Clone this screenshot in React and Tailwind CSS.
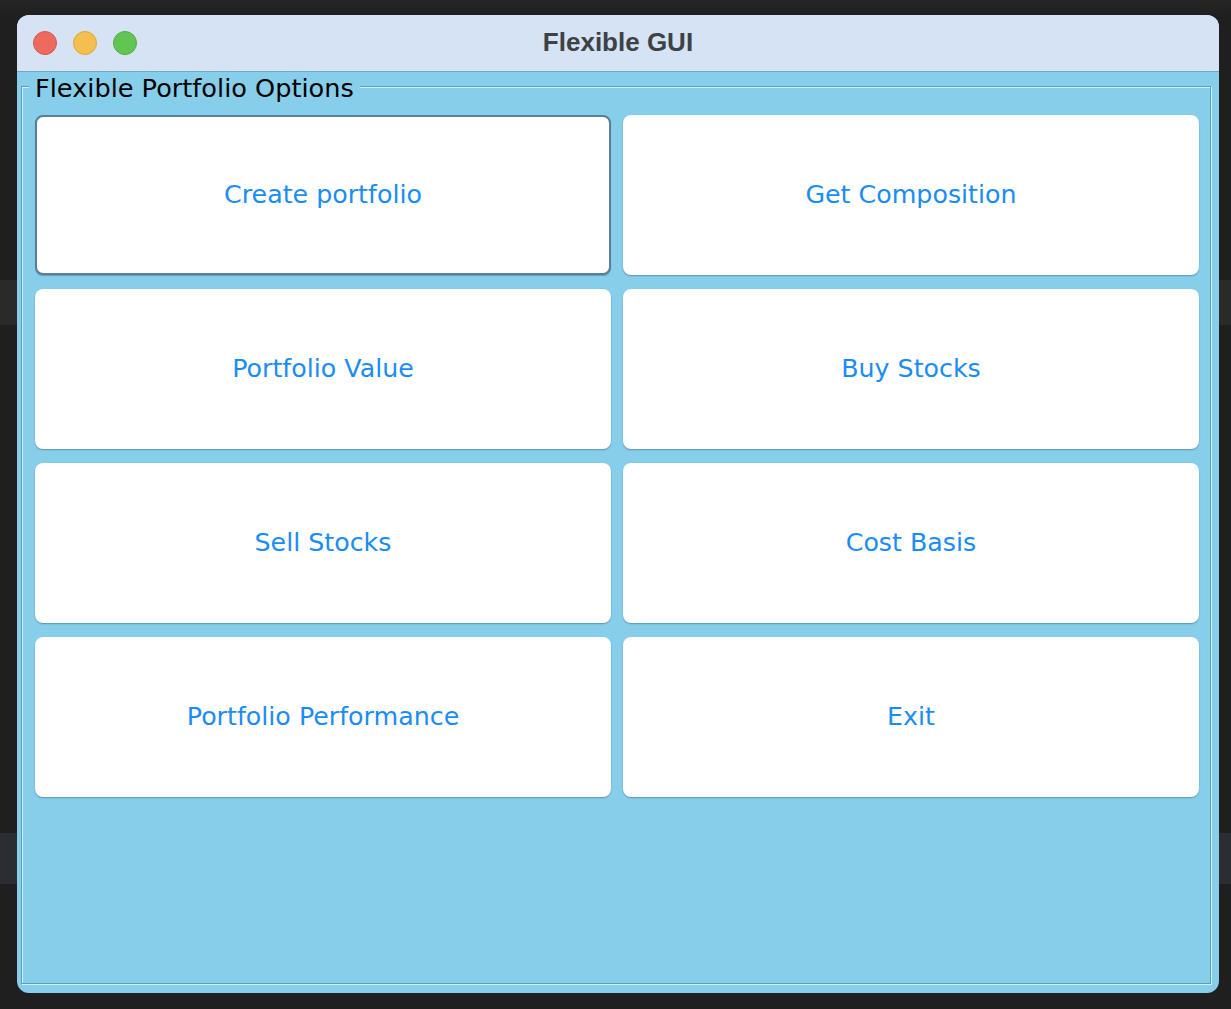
const options = [
  "Create portfolio",
  "Get Composition",
  "Portfolio Value",
  "Buy Stocks",
  "Sell Stocks",
  "Cost Basis",
  "Portfolio Performance",
  "Exit",
];

function TrafficLights() {
  return (
    <div className="flex items-center gap-4 pl-[16px]">
      <span className="w-6 h-6 rounded-full bg-[#ed6a5e] border border-[#d8564b]" />
      <span className="w-6 h-6 rounded-full bg-[#f5bf4f] border border-[#dea63a]" />
      <span className="w-6 h-6 rounded-full bg-[#61c554] border border-[#4fae43]" />
    </div>
  );
}

function OptionButton({ label, focused }) {
  return (
    <button
      className={
        focused
          ? "h-[160px] bg-white rounded-[8px] border-2 border-[#5b7e9e] text-[#1a8cf5] text-[25.3px] shadow-[0_1px_1px_rgba(30,60,90,0.35)]"
          : "h-[160px] bg-white rounded-[8px] text-[#1a8cf5] text-[25.3px] shadow-[0_1px_1.5px_rgba(30,60,90,0.4)]"
      }
      style={{ fontFamily: '"DejaVu Sans", Verdana, sans-serif' }}
    >
      {label}
    </button>
  );
}

export default function App() {
  return (
    <div className="w-[1231px] h-[1009px] pt-[15px] pl-[17px] pr-[12px] pb-[16px] bg-[linear-gradient(to_bottom,#262626_0px,#1f1f1f_15px,#1f1f1f_280px,#2a2a2a_280px,#2a2a2a_325px,#1f1f1f_325px,#1f1f1f_833px,#2c2d30_833px,#2c2d30_884px,#1f1f1f_884px)]">
      <div className="h-full flex flex-col rounded-[12px] overflow-hidden bg-[#87ceeb]">
        {/* title bar */}
        <div className="relative h-[57px] shrink-0 flex items-center bg-[#d5e3f4] border-b border-[#6fa8c6]">
          <TrafficLights />
          <div
            className="absolute inset-0 flex items-center justify-center text-[26px] font-bold text-[#3e4145] pb-[2px]"
            style={{ fontFamily: '"Liberation Sans", Arial, sans-serif' }}
          >
            Flexible GUI
          </div>
        </div>

        {/* content */}
        <div className="flex-1 flex flex-col pl-[4px] pr-[8px] pt-0 pb-[9px]">
          <fieldset className="flex-1 border border-[#5e9bb7] shadow-[inset_1px_1px_0_#c6f5ff,1px_1px_0_#c6f5ff] pl-[13px] pr-[11px] pt-[15px]">
            <legend
              className="-ml-[6px] px-[6px] pt-[4px] text-[25.6px] leading-[24px] text-black bg-[#87ceeb]"
              style={{ fontFamily: '"DejaVu Sans", Verdana, sans-serif' }}
            >
              Flexible Portfolio Options
            </legend>
            <div className="grid grid-cols-2 gap-x-[12px] gap-y-[14px]">
              {options.map((o, i) => (
                <OptionButton key={o} label={o} focused={i === 0} />
              ))}
            </div>
          </fieldset>
        </div>
      </div>
    </div>
  );
}
